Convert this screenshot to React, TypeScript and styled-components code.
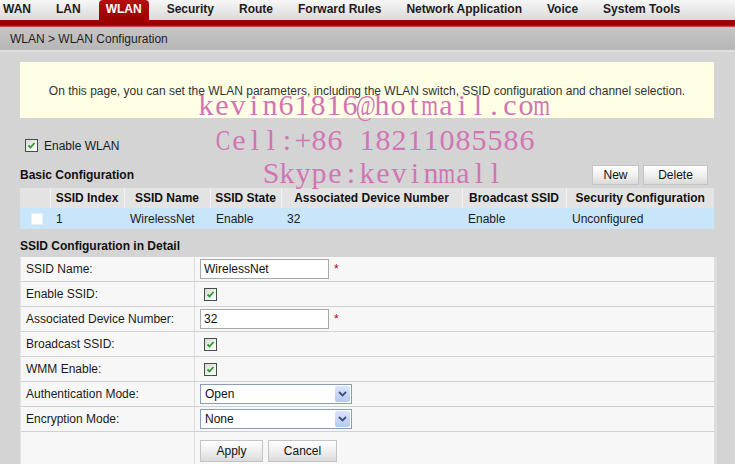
import React from "react";
import styled, { createGlobalStyle } from "styled-components";

const GlobalStyle = createGlobalStyle`
  html, body {
    margin: 0;
    padding: 0;
    background: #d4d4d4;
  }
  body {
    font-family: "Liberation Sans", Arial, sans-serif;
    font-size: 12px;
    color: #111;
  }
`;

const tabs = [
  "WAN",
  "LAN",
  "WLAN",
  "Security",
  "Route",
  "Forward Rules",
  "Network Application",
  "Voice",
  "System Tools",
];

const columns = [
  { title: "", width: 30 },
  { title: "SSID Index", width: 74 },
  { title: "SSID Name", width: 86 },
  { title: "SSID State", width: 71 },
  { title: "Associated Device Number", width: 181 },
  { title: "Broadcast SSID", width: 104 },
  { title: "Security Configuration", width: 148 },
];

const ssidRow = ["1", "WirelessNet", "Enable", "32", "Enable", "Unconfigured"];

// wide glyphs get squeezed so every character keeps its 16px cell
const wideChars = "mw@MWC";

const watermark = [
  { text: "kevin61816@hotmail.com", left: 198, top: 93 },
  { text: "Cell:+86 18211085586", left: 215, top: 128 },
  { text: "Skype:kevinmall", left: 263, top: 161 },
];

const CheckMark = () => (
  <svg width="9" height="9" viewBox="0 0 9 9">
    <polyline
      points="1.5,4.5 3.5,6.5 7.5,2"
      fill="none"
      stroke="#2f9a2f"
      strokeWidth="1.8"
    />
  </svg>
);

const Check = ({ checked = true }: { checked?: boolean }) => (
  <CheckBox $checked={checked}>{checked && <CheckMark />}</CheckBox>
);

const Select = ({ value }: { value: string }) => (
  <SelectBox>
    <SelectValue>{value}</SelectValue>
    <SelectArrow>
      <svg width="9" height="6" viewBox="0 0 9 6">
        <polyline
          points="1,1 4.5,4.5 8,1"
          fill="none"
          stroke="#3e4f7c"
          strokeWidth="1.8"
        />
      </svg>
    </SelectArrow>
  </SelectBox>
);

const App = () => {
  return (
    <Page>
      <GlobalStyle />
      <NavBar>
        {tabs.map((t) => (
          <Tab key={t} $active={t === "WLAN"}>
            {t}
          </Tab>
        ))}
      </NavBar>
      <RedBar />
      <Breadcrumb>WLAN &gt; WLAN Configuration</Breadcrumb>

      <Content>
        <InfoBox>
          On this page, you can set the WLAN parameters, including the WLAN
          switch, SSID configuration and channel selection.
        </InfoBox>

        <EnableRow>
          <Check />
          <span>Enable WLAN</span>
        </EnableRow>

        <SectionHead>
          <SectionTitle>Basic Configuration</SectionTitle>
          <ButtonGroup>
            <Button $w={47}>New</Button>
            <Button $w={65}>Delete</Button>
          </ButtonGroup>
        </SectionHead>

        <SsidTable>
          <colgroup>
            {columns.map((c, i) => (
              <col key={i} style={{ width: c.width }} />
            ))}
          </colgroup>
          <thead>
            <tr>
              {columns.map((c, i) => (
                <Th key={i}>{c.title}</Th>
              ))}
            </tr>
          </thead>
          <tbody>
            <tr>
              <Td>
                <RowBox />
              </Td>
              {ssidRow.map((v, i) => (
                <Td key={i}>{v}</Td>
              ))}
            </tr>
          </tbody>
        </SsidTable>

        <DetailTitle>SSID Configuration in Detail</DetailTitle>

        <DetailTable>
          <DetailRow>
            <Label>SSID Name:</Label>
            <Value>
              <TextInput defaultValue="WirelessNet" />
              <Required>*</Required>
            </Value>
          </DetailRow>
          <DetailRow>
            <Label>Enable SSID:</Label>
            <Value $check>
              <Check />
            </Value>
          </DetailRow>
          <DetailRow>
            <Label>Associated Device Number:</Label>
            <Value>
              <TextInput defaultValue="32" />
              <Required>*</Required>
            </Value>
          </DetailRow>
          <DetailRow>
            <Label>Broadcast SSID:</Label>
            <Value $check>
              <Check />
            </Value>
          </DetailRow>
          <DetailRow>
            <Label>WMM Enable:</Label>
            <Value $check>
              <Check />
            </Value>
          </DetailRow>
          <DetailRow>
            <Label>Authentication Mode:</Label>
            <Value>
              <Select value="Open" />
            </Value>
          </DetailRow>
          <DetailRow>
            <Label>Encryption Mode:</Label>
            <Value>
              <Select value="None" />
            </Value>
          </DetailRow>
          <ActionRow>
            <Label />
            <ActionCell>
              <Button $w={63} $h={22}>
                Apply
              </Button>
              <Button $w={69} $h={22}>
                Cancel
              </Button>
            </ActionCell>
          </ActionRow>
        </DetailTable>
      </Content>

      <Watermark aria-hidden>
        {watermark.map((line) => (
          <WaterLine
            key={line.text}
            style={{ left: line.left, top: line.top }}
          >
            {line.text.split("").map((ch, i) => (
              <WaterChar key={i}>
                <Glyph $wide={wideChars.includes(ch)}>{ch}</Glyph>
              </WaterChar>
            ))}
          </WaterLine>
        ))}
      </Watermark>
    </Page>
  );
};

export default App;

const Page = styled.div`
  position: relative;
  width: 735px;
  height: 464px;
  overflow: hidden;
  background: #d4d4d4;
`;

const NavBar = styled.div`
  display: flex;
  height: 20px;
  gap: 25px;
  padding-left: 3px;
  background: linear-gradient(#f7f7f7, #d9d9d9);
`;

const Tab = styled.div<{ $active?: boolean }>`
  display: flex;
  align-items: center;
  padding-bottom: 2px;
  font-weight: bold;
  font-size: 12px;
  white-space: nowrap;
  color: ${(p) => (p.$active ? "#ffffff" : "#1c1c1c")};
  background: ${(p) => (p.$active ? "linear-gradient(#b41010, #9a0000)" : "none")};
  border-radius: ${(p) => (p.$active ? "4px 4px 0 0" : "0")};
  padding-left: ${(p) => (p.$active ? "7px" : "0")};
  padding-right: ${(p) => (p.$active ? "7px" : "0")};
  margin: ${(p) => (p.$active ? "0 -7px" : "0")};
`;

const RedBar = styled.div`
  height: 7px;
  background: linear-gradient(#a50000, #8f0000 70%, #c85a5a);
`;

const Breadcrumb = styled.div`
  display: flex;
  align-items: center;
  height: 22px;
  padding: 1px 0 0 10px;
  background: linear-gradient(#c6c6c6, #b6b6b6);
  border-bottom: 2px solid #e0e0e0;
  color: #1e1e1e;
`;

const Content = styled.div`
  padding: 10px 21px 0 20px;
`;

const InfoBox = styled.div`
  display: flex;
  align-items: center;
  justify-content: center;
  height: 56px;
  padding-top: 1px;
  box-sizing: border-box;
  background: #ffffe6;
  color: #333;
`;

const EnableRow = styled.div`
  display: flex;
  align-items: center;
  gap: 6px;
  height: 20px;
  margin-top: 17px;
  padding: 1px 0 0 5px;
  box-sizing: border-box;
  color: #1a1a1a;
`;

const CheckBox = styled.span<{ $checked?: boolean }>`
  display: inline-flex;
  align-items: center;
  justify-content: center;
  box-sizing: border-box;
  width: 13px;
  height: 13px;
  border: 1px solid #3f4f4a;
  background: linear-gradient(135deg, #dadad2, #ffffff);
`;

const SectionHead = styled.div`
  display: flex;
  align-items: center;
  justify-content: space-between;
  height: 20px;
  margin-top: 10px;
`;

const SectionTitle = styled.div`
  font-weight: bold;
  color: #111;
`;

const ButtonGroup = styled.div`
  display: flex;
  gap: 4px;
  margin-right: 6px;
`;

const Button = styled.button<{ $w: number; $h?: number }>`
  box-sizing: border-box;
  width: ${(p) => p.$w}px;
  height: ${(p) => p.$h ?? 20}px;
  padding: 0;
  font-family: "Liberation Sans", Arial, sans-serif;
  font-size: 12px;
  color: #111;
  background: linear-gradient(#ffffff, #f0f0f0 50%, #dadada);
  border: 1px solid #c4c4c4;
  border-radius: 0;
`;

const SsidTable = styled.table`
  width: 694px;
  margin-top: 3px;
  border-collapse: collapse;
  table-layout: fixed;
`;

const Th = styled.th`
  height: 20px;
  padding: 0;
  background: #e3e3e3;
  border-left: 1px solid #f3f3f3;
  font-weight: bold;
  text-align: center;
  white-space: nowrap;
  color: #111;

  &:first-child {
    border-left: none;
  }
`;

const Td = styled.td`
  height: 21px;
  padding: 0 0 0 6px;
  background: #c9e5f9;
  white-space: nowrap;
  color: #1a1a1a;

  &:first-child {
    padding-left: 11px;
  }
`;

const RowBox = styled.span`
  display: block;
  width: 12px;
  height: 12px;
  background: #ffffff;
  border: 1px solid #e6eef4;
  box-sizing: border-box;
`;

const DetailTitle = styled.div`
  display: flex;
  align-items: center;
  height: 20px;
  margin-top: 7px;
  font-weight: bold;
`;

const DetailTable = styled.div`
  margin-top: 1px;
  background: #f7f7f7;
  border-left: 1px solid #e4e4e4;
  border-right: 3px solid #dedede;
  margin-right: -3px;
`;

const DetailRow = styled.div`
  display: grid;
  grid-template-columns: 174px 1fr;
  height: 24px;
  border-bottom: 1px solid #d0d0d0;
`;

const ActionRow = styled(DetailRow)`
  height: 40px;
  border-bottom: none;
`;

const Label = styled.div`
  display: flex;
  align-items: center;
  padding-left: 5px;
  border-right: 1px solid #dcdcdc;
  color: #1a1a1a;
`;

const Value = styled.div<{ $check?: boolean }>`
  display: flex;
  align-items: center;
  padding-left: ${(p) => (p.$check ? "9px" : "5px")};
`;

const ActionCell = styled.div`
  display: flex;
  align-items: flex-start;
  gap: 5px;
  padding: 8px 0 0 5px;
`;

const TextInput = styled.input`
  box-sizing: border-box;
  width: 129px;
  height: 20px;
  padding: 0 3px;
  font-family: "Liberation Sans", Arial, sans-serif;
  font-size: 12px;
  color: #111;
  background: #ffffff;
  border: 1px solid #a3a9ad;
  outline: none;
`;

const Required = styled.span`
  margin-left: 5px;
  color: #c00000;
  font-size: 12px;
`;

const SelectBox = styled.div`
  position: relative;
  box-sizing: border-box;
  display: flex;
  align-items: center;
  width: 152px;
  height: 20px;
  padding-left: 4px;
  background: #ffffff;
  border: 1px solid #8a9eb6;
`;

const SelectValue = styled.span`
  color: #111;
`;

const SelectArrow = styled.span`
  position: absolute;
  right: 1px;
  top: 1px;
  display: flex;
  align-items: center;
  justify-content: center;
  width: 15px;
  height: 16px;
  border-radius: 2px;
  background: linear-gradient(#dbe5fb, #b6c9f1);
`;

const Watermark = styled.div`
  position: absolute;
  inset: 0;
  pointer-events: none;
`;

const WaterLine = styled.div`
  position: absolute;
  display: flex;
  white-space: nowrap;
  font-family: "Liberation Serif", "Times New Roman", serif;
  font-size: 30px;
  line-height: 24px;
  color: #d274b5;
`;

const WaterChar = styled.span`
  display: inline-flex;
  justify-content: center;
  width: 16px;
`;

const Glyph = styled.span<{ $wide?: boolean }>`
  display: inline-block;
  transform: ${(p) => (p.$wide ? "scaleX(0.72)" : "none")};
`;
